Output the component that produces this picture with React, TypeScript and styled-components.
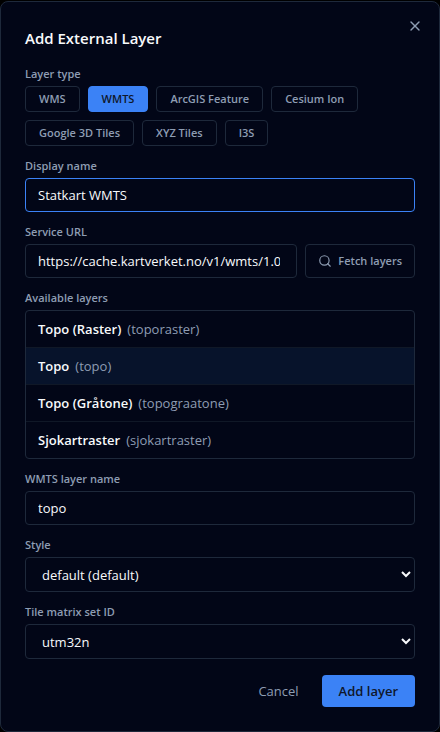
import React, { useState } from "react";
import styled, { createGlobalStyle, css } from "styled-components";
import { Search, X } from "lucide-react";

const color = {
  surface: "#020617",
  border: "#1e293b",
  rowBorder: "#101827",
  muted: "#8e9db3",
  text: "#f8fafc",
  primary: "#3b82f6",
  onPrimary: "#0f172a",
  selected: "#07132b",
};

const GlobalStyle = createGlobalStyle`
  *, *::before, *::after { box-sizing: border-box; }
  body {
    margin: 0;
    background: #000;
    color: ${color.text};
    font-family: "Segoe UI", "Open Sans", "Noto Sans", sans-serif;
    font-size: 13px;
    line-height: 20px;
  }
  button, input, select { font: inherit; margin: 0; }
`;

const Page = styled.main`
  padding-top: 1px;
`;

const Dialog = styled.form`
  position: relative;
  display: flex;
  flex-direction: column;
  gap: 16px;
  padding: 24px;
  background: ${color.surface};
  border: 1px solid ${color.border};
  border-radius: 8px;
`;

const Title = styled.h1`
  margin: 0;
  font-size: 15px;
  line-height: 24px;
  font-weight: 600;
`;

const CloseButton = styled.button`
  position: absolute;
  top: 16px;
  right: 16px;
  display: flex;
  padding: 0;
  border: 0;
  background: none;
  color: ${color.muted};
  cursor: pointer;
`;

const Fields = styled.div`
  display: flex;
  flex-direction: column;
  gap: 12px;
`;

const Field = styled.div`
  display: flex;
  flex-direction: column;
  gap: 4px;
`;

const labelText = css`
  color: ${color.muted};
  font-size: 11px;
  line-height: 16px;
  font-weight: 600;
`;

const Label = styled.label`
  ${labelText}
`;

const GroupLabel = styled.span`
  ${labelText}
`;

const ChipList = styled.div`
  display: flex;
  flex-wrap: wrap;
  gap: 8px;
`;

const Chip = styled.button<{ $active: boolean }>`
  padding: 4px 13px;
  border: 1px solid ${(p) => (p.$active ? color.primary : color.border)};
  border-radius: 4px;
  background: ${(p) => (p.$active ? color.primary : "transparent")};
  color: ${(p) => (p.$active ? color.onPrimary : color.muted)};
  font-size: 11px;
  line-height: 16px;
  font-weight: 600;
  cursor: pointer;
`;

const controlBox = css`
  width: 100%;
  min-width: 0;
  border: 1px solid ${color.border};
  border-radius: 4px;
  background: ${color.surface};
  color: ${color.text};
  outline: none;
`;

const TextInput = styled.input<{ $highlighted?: boolean }>`
  ${controlBox}
  height: 34px;
  padding: 6px 16px 6px 12px;
  border-color: ${(p) => (p.$highlighted ? color.primary : color.border)};
  &:focus { border-color: ${color.primary}; }
`;

const Select = styled.select`
  ${controlBox}
  height: 35px;
  padding: 6px 0 6px 12px;
  &:focus { border-color: ${color.primary}; }
`;

const InlineRow = styled.div`
  display: flex;
  gap: 8px;
`;

const FetchButton = styled.button`
  display: flex;
  flex-shrink: 0;
  align-items: center;
  gap: 6px;
  padding: 0 12px;
  border: 1px solid ${color.border};
  border-radius: 4px;
  background: transparent;
  ${labelText}
  cursor: pointer;
`;

const LayerList = styled.ul`
  margin: 0;
  padding: 0;
  list-style: none;
  border: 1px solid ${color.border};
  border-radius: 4px;
  overflow: hidden;
`;

const LayerItem = styled.li`
  & + & { border-top: 1px solid ${color.rowBorder}; }
`;

const LayerButton = styled.button<{ $selected: boolean }>`
  display: flex;
  gap: 6px;
  width: 100%;
  padding: 8px 12px;
  border: 0;
  background: ${(p) => (p.$selected ? color.selected : "transparent")};
  color: ${color.text};
  text-align: left;
  cursor: pointer;
`;

const LayerTitle = styled.span`
  font-weight: 600;
`;

const LayerId = styled.span`
  color: ${color.muted};
`;

const Footer = styled.footer`
  display: flex;
  justify-content: flex-end;
  gap: 6px;
`;

const Action = styled.button<{ $primary?: boolean }>`
  padding: 6px 17px;
  border: 0;
  border-radius: 4px;
  background: ${(p) => (p.$primary ? color.primary : "transparent")};
  color: ${(p) => (p.$primary ? color.onPrimary : color.muted)};
  font-weight: ${(p) => (p.$primary ? 600 : 400)};
  cursor: pointer;
`;

const layerTypes = ["WMS", "WMTS", "ArcGIS Feature", "Cesium Ion", "Google 3D Tiles", "XYZ Tiles", "I3S"];

const layers = [
  { id: "toporaster", title: "Topo (Raster)" },
  { id: "topo", title: "Topo" },
  { id: "topograatone", title: "Topo (Gråtone)" },
  { id: "sjokartraster", title: "Sjokartraster" },
];

export default function App() {
  const [type, setType] = useState("WMTS");
  const [layer, setLayer] = useState("topo");

  return (
    <Page>
      <GlobalStyle />
      <Dialog role="dialog" aria-labelledby="dialog-title" onSubmit={(e) => e.preventDefault()}>
        <Title id="dialog-title">Add External Layer</Title>
        <CloseButton type="button" aria-label="Close">
          <X size={16} />
        </CloseButton>

        <Fields>
          <Field role="group" aria-labelledby="type-label">
            <GroupLabel id="type-label">Layer type</GroupLabel>
            <ChipList>
              {layerTypes.map((name) => (
                <Chip
                  key={name}
                  type="button"
                  $active={name === type}
                  aria-pressed={name === type}
                  onClick={() => setType(name)}
                >
                  {name}
                </Chip>
              ))}
            </ChipList>
          </Field>

          <Field>
            <Label htmlFor="display-name">Display name</Label>
            <TextInput id="display-name" $highlighted defaultValue="Statkart WMTS" />
          </Field>

          <Field>
            <Label htmlFor="service-url">Service URL</Label>
            <InlineRow>
              <TextInput
                id="service-url"
                defaultValue="https://cache.kartverket.no/v1/wmts/1.0.0/WMTSCapabilities.xml"
              />
              <FetchButton type="button">
                <Search size={14} />
                Fetch layers
              </FetchButton>
            </InlineRow>
          </Field>

          <Field role="group" aria-labelledby="layers-label">
            <GroupLabel id="layers-label">Available layers</GroupLabel>
            <LayerList>
              {layers.map((item) => (
                <LayerItem key={item.id}>
                  <LayerButton
                    type="button"
                    $selected={item.id === layer}
                    aria-pressed={item.id === layer}
                    onClick={() => setLayer(item.id)}
                  >
                    <LayerTitle>{item.title}</LayerTitle>
                    <LayerId>({item.id})</LayerId>
                  </LayerButton>
                </LayerItem>
              ))}
            </LayerList>
          </Field>

          <Field>
            <Label htmlFor="layer-name">WMTS layer name</Label>
            <TextInput id="layer-name" value={layer} onChange={(e) => setLayer(e.target.value)} />
          </Field>

          <Field>
            <Label htmlFor="style">Style</Label>
            <Select id="style" defaultValue="default">
              <option value="default">default (default)</option>
            </Select>
          </Field>

          <Field>
            <Label htmlFor="matrix-set">Tile matrix set ID</Label>
            <Select id="matrix-set" defaultValue="utm32n">
              <option value="utm32n">utm32n</option>
            </Select>
          </Field>
        </Fields>

        <Footer>
          <Action type="button">Cancel</Action>
          <Action type="submit" $primary>
            Add layer
          </Action>
        </Footer>
      </Dialog>
    </Page>
  );
}
